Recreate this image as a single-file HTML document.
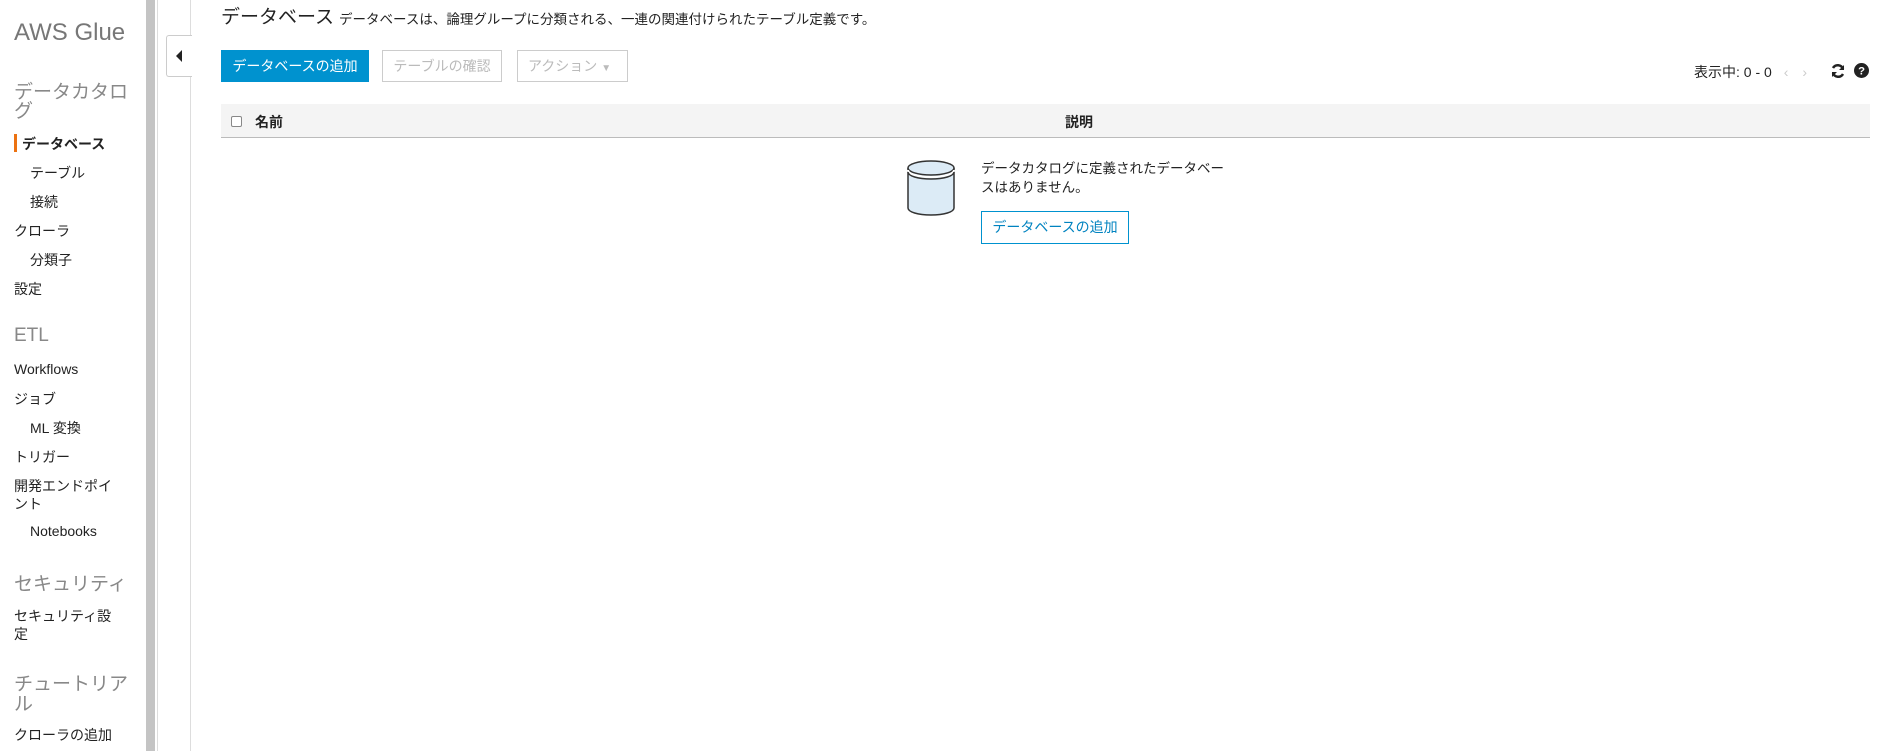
<!DOCTYPE html>
<html><head><meta charset="utf-8"><style>
*{box-sizing:border-box;margin:0;padding:0}
body{width:1897px;height:751px;overflow:hidden;background:#fff;font-family:"Liberation Sans","Noto Sans CJK JP",sans-serif;color:#222;position:relative}
.a{position:absolute;white-space:nowrap}
.side{font-size:14px;color:#222}
.h{color:#888;font-size:19px}
</style></head><body>
<div class="a" style="left:14px;top:19px;font-size:24px;color:#777">AWS Glue</div>
<div class="a h" style="left:14px;top:77px">データカタロ</div>
<div class="a h" style="left:14px;top:96px">グ</div>
<div class="a" style="left:14px;top:134px;width:3px;height:18px;background:#ec7211"></div>
<div class="a side" style="left:22px;top:134px;font-weight:bold">データベース</div>
<div class="a side" style="left:30px;top:163px">テーブル</div>
<div class="a side" style="left:30px;top:192px">接続</div>
<div class="a side" style="left:14px;top:221px">クローラ</div>
<div class="a side" style="left:30px;top:250px">分類子</div>
<div class="a side" style="left:14px;top:279px">設定</div>
<div class="a h" style="left:14px;top:325px">ETL</div>
<div class="a side" style="left:14px;top:361px">Workflows</div>
<div class="a side" style="left:14px;top:389px">ジョブ</div>
<div class="a side" style="left:30px;top:418px">ML 変換</div>
<div class="a side" style="left:14px;top:447px">トリガー</div>
<div class="a side" style="left:14px;top:476px">開発エンドポイ</div>
<div class="a side" style="left:14px;top:494px">ント</div>
<div class="a side" style="left:30px;top:523px">Notebooks</div>
<div class="a h" style="left:14px;top:569px">セキュリティ</div>
<div class="a side" style="left:14px;top:606px">セキュリティ設</div>
<div class="a side" style="left:14px;top:624px">定</div>
<div class="a h" style="left:14px;top:669px">チュートリア</div>
<div class="a h" style="left:14px;top:689px">ル</div>
<div class="a side" style="left:14px;top:725px">クローラの追加</div>
<div class="a" style="left:146px;top:0;width:9px;height:751px;background:#c4c4c4"></div>
<div class="a" style="left:157px;top:0;width:1px;height:751px;background:#ddd"></div>
<div class="a" style="left:190px;top:0;width:1px;height:751px;background:#ddd"></div>
<div class="a" style="left:166px;top:35px;width:26px;height:42px;background:#fff;border:1px solid #ccc;border-right:none;border-radius:3px 0 0 3px"></div>
<div class="a" style="left:176px;top:50px;width:0;height:0;border-top:6px solid transparent;border-bottom:6px solid transparent;border-right:6px solid #222"></div>
<div class="a" style="left:221px;top:2px;font-size:19px;color:#222">データベース</div>
<div class="a" style="left:339px;top:8px;font-size:13.5px">データベースは、論理グループに分類される、一連の関連付けられたテーブル定義です。</div>
<div class="a" style="left:221px;top:50px;width:148px;height:32px;background:#0092cf;color:#fff;font-size:14px;line-height:32px;text-align:center">データベースの追加</div>
<div class="a" style="left:382px;top:50px;width:120px;height:32px;border:1px solid #ccc;color:#bbb;font-size:14px;line-height:30px;text-align:center">テーブルの確認</div>
<div class="a" style="left:517px;top:50px;width:111px;height:32px;border:1px solid #ccc;color:#bbb;font-size:14px;line-height:30px;padding-left:10px">アクション <span style="font-size:10px">▼</span></div>
<div class="a" style="left:1694px;top:62px;font-size:14px">表示中: 0 - 0 <span style="color:#ccc;margin-left:8px">&lsaquo;</span><span style="color:#ccc;margin-left:14px">&rsaquo;</span></div>
<svg class="a" style="left:1830px;top:63px" width="16" height="16" viewBox="0 0 16 16"><path d="M13 6A5.5 5.5 0 0 0 3 5M3 10a5.5 5.5 0 0 0 10 1" fill="none" stroke="#222" stroke-width="2.5"/><path d="M14 2v5h-5zM2 14V9h5z" fill="#222"/></svg>
<svg class="a" style="left:1854px;top:63px" width="15" height="15" viewBox="0 0 16 16"><circle cx="8" cy="8" r="8" fill="#222"/><text x="8" y="12.5" font-size="12" font-weight="bold" fill="#fff" text-anchor="middle" font-family="Liberation Sans">?</text></svg>
<div class="a" style="left:221px;top:104px;width:1649px;height:34px;background:#f4f4f4;border-bottom:1px solid #bbb"></div>
<div class="a" style="left:231px;top:116px;width:11px;height:11px;border:1px solid #888;border-radius:2px;background:#fff"></div>
<div class="a" style="left:255px;top:112px;font-size:14px;font-weight:bold">名前</div>
<div class="a" style="left:1065px;top:112px;font-size:14px;font-weight:bold">説明</div>
<svg class="a" style="left:905px;top:158px" width="52" height="60" viewBox="0 0 52 60"><path d="M3 10v40c0 4 10 7 23 7s23-3 23-7V10" fill="#dcebf6" stroke="#333" stroke-width="1.5"/><ellipse cx="26" cy="10" rx="23" ry="7" fill="#dcebf6" stroke="#333" stroke-width="1.5"/><path d="M3 12c0 4 10 7 23 7s23-3 23-7" fill="none" stroke="#fff" stroke-width="2"/><path d="M3 14c0 4 10 7 23 7s23-3 23-7" fill="none" stroke="#333" stroke-width="1.5"/></svg>
<div class="a" style="left:981px;top:159px;font-size:13.5px;line-height:19px;white-space:normal;width:260px">データカタログに定義されたデータベー<br>スはありません。</div>
<div class="a" style="left:981px;top:211px;width:148px;height:33px;border:1px solid #0092cf;color:#0083c0;font-size:14px;line-height:31px;text-align:center">データベースの追加</div>
</body></html>
